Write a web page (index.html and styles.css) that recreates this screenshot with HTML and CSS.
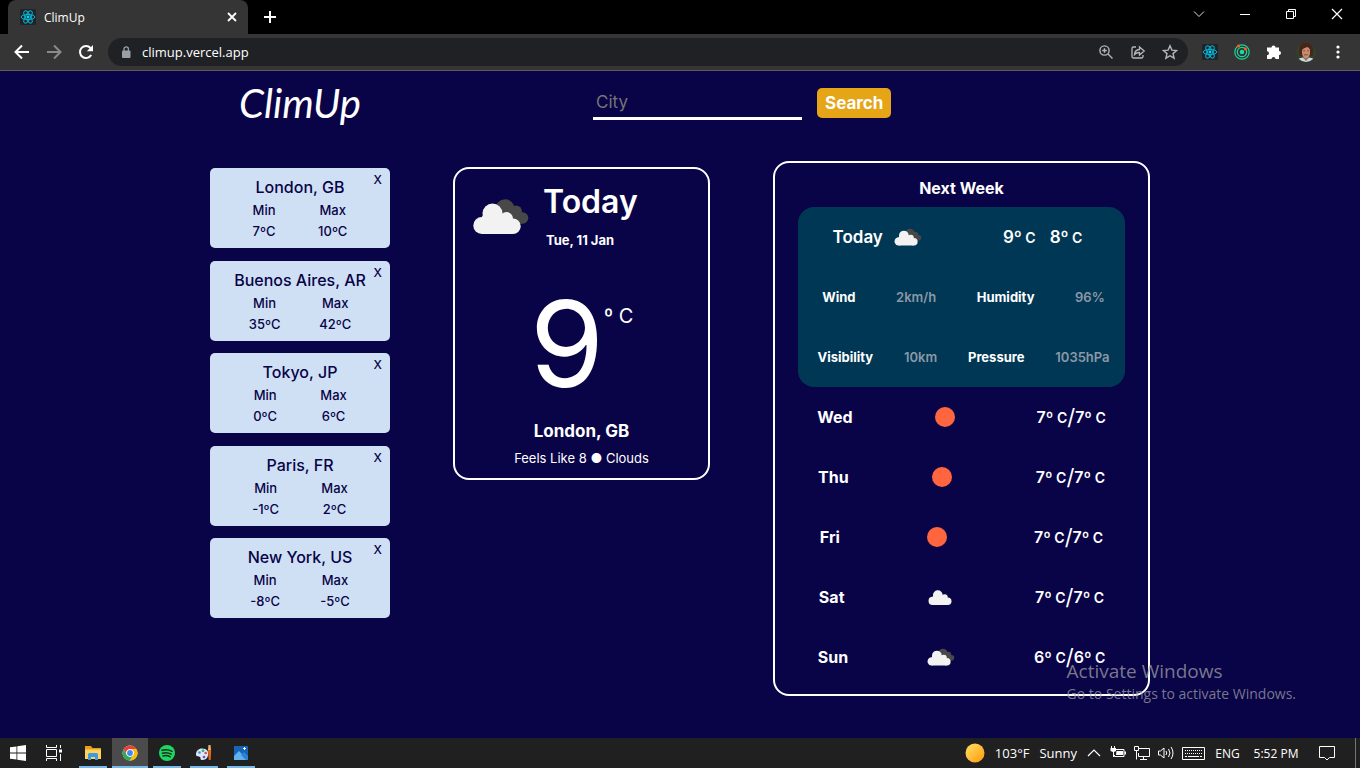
FILE: index.html
```html
<!DOCTYPE html>
<html lang="en">
<head>
<meta charset="utf-8">
<title>ClimUp</title>
<meta name="viewport" content="width=device-width, initial-scale=1">
<link rel="stylesheet" href="styles.css">
</head>
<body>
<svg class="defs" aria-hidden="true">
  <symbol id="react" viewBox="0 0 16 16">
    <rect width="16" height="16" rx="1" fill="#20232a"/>
    <g fill="none" stroke="#00b8d4" stroke-width="1">
      <ellipse cx="8" cy="8" rx="6.8" ry="2.6"/>
      <ellipse cx="8" cy="8" rx="6.8" ry="2.6" transform="rotate(60 8 8)"/>
      <ellipse cx="8" cy="8" rx="6.8" ry="2.6" transform="rotate(120 8 8)"/>
    </g>
    <circle cx="8" cy="8" r="1.4" fill="#00d8ff"/>
  </symbol>
  <symbol id="broken" viewBox="0 0 56 37">
    <g fill="#484848"><circle cx="32" cy="11" r="9.7"/><circle cx="43" cy="13.500" r="6"/><circle cx="49.500" cy="20" r="5.800"/><path d="M30 12h15l4 13.800H38z"/></g>
    <g fill="#f2f2f2"><circle cx="19.500" cy="15.500" r="10"/><circle cx="8.800" cy="27.500" r="8.500"/><circle cx="33.500" cy="20.500" r="6.500"/><circle cx="40" cy="28.300" r="7.700"/><path d="M8.800 19l2-3.500h18L38 21l2 15H8.800z"/></g>
  </symbol>
  <symbol id="cloud" viewBox="0 5 48 31">
    <g fill="#f2f2f2"><circle cx="19.500" cy="15.500" r="10"/><circle cx="8.800" cy="27.500" r="8.500"/><circle cx="33.500" cy="20.500" r="6.500"/><circle cx="40" cy="28.300" r="7.700"/><path d="M8.800 19l2-3.500h18L38 21l2 15H8.800z"/></g>
  </symbol>
  <symbol id="sun" viewBox="0 0 20 20"><circle cx="10" cy="10" r="10" fill="#ff6640"/></symbol>
</svg>

<header class="browser">
  <div class="tabs">
    <div class="tab">
      <svg class="i16"><use href="#react"/></svg>
      <span class="tab-title">ClimUp</span>
      <button class="tab-close" aria-label="Close tab"><svg class="i16" viewBox="0 0 16 16"><path d="M4 4l8 8M12 4l-8 8" stroke="#fff" stroke-width="1.800"/></svg></button>
    </div>
    <button class="new-tab" aria-label="New tab"><svg class="i16" viewBox="0 0 16 16"><path d="M8 2v12M2 8h12" stroke="#fff" stroke-width="2"/></svg></button>
    <div class="window-controls">
      <button aria-label="Search tabs"><svg class="i16" viewBox="0 0 16 16"><path d="M3 5.500l5 5 5-5" fill="none" stroke="#ddd"/></svg></button>
      <button aria-label="Minimize"><svg class="i16" viewBox="0 0 16 16"><path d="M3 8.500h10" stroke="#fff"/></svg></button>
      <button aria-label="Restore"><svg class="i16" viewBox="0 0 16 16"><path d="M3.500 5.500h7v7h-7zM5.500 5.500v-2h7v7h-2" fill="none" stroke="#fff"/></svg></button>
      <button aria-label="Close"><svg class="i16" viewBox="0 0 16 16"><path d="M3 3l10 10M13 3L3 13" stroke="#fff" stroke-width="1.200"/></svg></button>
    </div>
  </div>
  <div class="toolbar">
    <button class="tool" aria-label="Back"><svg class="i16" viewBox="0 0 16 16"><path d="M15 8H2M8 1.500L1.500 8 8 14.500" fill="none" stroke="#fff" stroke-width="2"/></svg></button>
    <button class="tool" aria-label="Forward"><svg class="i16" viewBox="0 0 16 16"><path d="M1 8h13M8 1.500L14.500 8 8 14.500" fill="none" stroke="#8a8a8a" stroke-width="2"/></svg></button>
    <button class="tool" aria-label="Reload"><svg class="i16" viewBox="0 0 16 16"><path d="M13.200 11A6 6 0 1 1 12.500 4" fill="none" stroke="#fff" stroke-width="2"/><path d="M15 1v6.200H8.800z" fill="#fff"/></svg></button>
    <div class="omnibox">
      <svg class="lock" viewBox="0 0 10 12"><rect x="1" y="4.500" width="8.500" height="7.500" rx="1" fill="#9aa0a6"/><path d="M3 5V3a2.200 2.200 0 0 1 4.400 0v2" fill="none" stroke="#9aa0a6" stroke-width="1.300"/></svg>
      <input class="url" type="text" aria-label="Address" value="climup.vercel.app">
      <button class="tool" aria-label="Zoom"><svg class="i16" viewBox="0 0 16 16" fill="none" stroke="#b4b7ba" stroke-width="1.400"><circle cx="6.500" cy="6.500" r="4.600"/><path d="M10 10l4.500 4.500M4.200 6.500h4.600M6.500 4.200v4.600"/></svg></button>
      <button class="tool" aria-label="Share"><svg class="i16" viewBox="0 0 16 16" fill="none" stroke="#b4b7ba" stroke-width="1.300"><path d="M6 3H3.500A1.500 1.500 0 0 0 2 4.500v8A1.500 1.500 0 0 0 3.500 14h8a1.500 1.500 0 0 0 1.500-1.500V11"/><path d="M4.500 10.500c.3-3.200 2-4.800 5-5V3l4.700 4-4.700 4V8.500c-2.200 0-3.700.5-5 2z"/></svg></button>
      <button class="tool" aria-label="Bookmark"><svg class="i16" viewBox="0 0 16 16"><path d="M8 1.800l1.900 4.300 4.700.4-3.600 3.100 1.100 4.600L8 11.700l-4.100 2.500L5 9.600 1.400 6.500l4.700-.4z" fill="none" stroke="#b4b7ba" stroke-width="1.400"/></svg></button>
    </div>
    <button class="tool" aria-label="React Developer Tools"><svg class="i16"><use href="#react"/></svg></button>
    <button class="tool" aria-label="Orbit extension"><svg class="i16" viewBox="0 0 16 16" fill="none" stroke="#14d99a" stroke-width="1.200"><circle cx="8" cy="8" r="7.200"/><circle cx="8" cy="8" r="4.700"/><circle cx="8" cy="8" r="1.700" fill="#14e3a0"/><circle cx="4.500" cy="2" r="1.600" fill="#ff5a1f" stroke="none"/><circle cx="11.400" cy="4.800" r="1.600" fill="#ff5a1f" stroke="none"/></svg></button>
    <button class="tool" aria-label="Extensions"><svg class="i16" viewBox="0 0 16 16"><path fill="#fff" d="M2 3.500h3.500a2 2 0 1 1 4 0H13V7a2 2 0 1 1 0 4v4H9.500a2 2 0 0 0-4 0H1v-3.700a2 2 0 0 0 0-4V3.500z"/></svg></button>
    <button class="tool" aria-label="Profile"><svg class="avatar" viewBox="0 0 20 20"><clipPath id="round"><circle cx="10" cy="10" r="10"/></clipPath><g clip-path="url(#round)"><path fill="#33402a" d="M0 0h20v20H0z"/><path fill="#47261a" d="M3.500 14C2 4 5 .500 10 .500s9 4 6.500 13.500z"/><path fill="#a96c55" d="M7.500 13h5v4l-2.500 2-2.500-2z"/><path fill="#c98c72" d="M6 7c1-3 7-3 8 0v4c0 3-2 5-4 5s-4-2-4-5z"/><path fill="#47261a" d="M5.500 9c0-5 3-6 5-6 3 0 4.500 2 4 6-1-3-2-4-3.500-4C9 6 7 6 5.500 9z"/><path fill="#6b3b2b" d="M7 8.500h2v.8H7zM11 8.500h2v.8h-2zM8 12.500h4v.8H8z"/><path fill="#c4dbe2" d="M1 20c0-3 3-4 6-4.500L10 19l3-3.500c3 .5 6 1.500 6 4.500z"/></g></svg></button>
    <button class="tool" aria-label="Menu"><svg class="i16" viewBox="0 0 16 16" fill="#fff"><circle cx="8" cy="3" r="1.600"/><circle cx="8" cy="8" r="1.600"/><circle cx="8" cy="13" r="1.600"/></svg></button>
  </div>
</header>

<main class="app">
  <div class="page">
    <div class="topbar">
      <h1 class="logo">ClimUp</h1>
      <form class="search">
        <input class="city" type="text" placeholder="City" aria-label="City">
        <button class="submit" type="button">Search</button>
      </form>
    </div>
    <div class="content">
      <section class="favorites" aria-label="Saved cities">
        <article class="fav"><button class="remove" aria-label="Remove London">X</button><h2>London, GB</h2><div class="range"><p>Min<br>7ºC</p><p>Max<br>10ºC</p></div></article>
        <article class="fav"><button class="remove" aria-label="Remove Buenos Aires">X</button><h2>Buenos Aires, AR</h2><div class="range"><p>Min<br>35ºC</p><p>Max<br>42ºC</p></div></article>
        <article class="fav"><button class="remove" aria-label="Remove Tokyo">X</button><h2>Tokyo, JP</h2><div class="range"><p>Min<br>0ºC</p><p>Max<br>6ºC</p></div></article>
        <article class="fav"><button class="remove" aria-label="Remove Paris">X</button><h2>Paris, FR</h2><div class="range"><p>Min<br>-1ºC</p><p>Max<br>2ºC</p></div></article>
        <article class="fav"><button class="remove" aria-label="Remove New York">X</button><h2>New York, US</h2><div class="range"><p>Min<br>-8ºC</p><p>Max<br>-5ºC</p></div></article>
      </section>

      <section class="today">
        <div class="today-head">
          <svg class="today-icon"><use href="#broken"/></svg>
          <div><h2>Today</h2><p class="date">Tue, 11 Jan</p></div>
        </div>
        <div class="now"><span class="degrees">9</span><span class="unit">º C</span></div>
        <p class="place">London, GB</p>
        <p class="feels">Feels Like 8 ● Clouds</p>
      </section>

      <section class="week">
        <h2>Next Week</h2>
        <div class="detail">
          <div class="detail-row head">
            <div class="label">Today<svg class="small-broken"><use href="#broken"/></svg></div>
            <div class="pair"><span>9º<small> C</small></span><span>8º<small> C</small></span></div>
          </div>
          <div class="detail-row"><b>Wind</b><span>2km/h</span><b>Humidity</b><span>96%</span></div>
          <div class="detail-row"><b>Visibility</b><span>10km</span><b>Pressure</b><span>1035hPa</span></div>
        </div>
        <div class="day"><b>Wed</b><span class="sky"><svg class="small-sun"><use href="#sun"/></svg></span><span class="temps">7º<small> C</small><i>/</i>7º<small> C</small></span></div>
        <div class="day"><b>Thu</b><span class="sky"><svg class="small-sun"><use href="#sun"/></svg></span><span class="temps">7º<small> C</small><i>/</i>7º<small> C</small></span></div>
        <div class="day"><b>Fri</b><span class="sky"><svg class="small-sun"><use href="#sun"/></svg></span><span class="temps">7º<small> C</small><i>/</i>7º<small> C</small></span></div>
        <div class="day"><b>Sat</b><span class="sky"><svg class="small-cloud"><use href="#cloud"/></svg></span><span class="temps">7º<small> C</small><i>/</i>7º<small> C</small></span></div>
        <div class="day"><b>Sun</b><span class="sky"><svg class="small-broken"><use href="#broken"/></svg></span><span class="temps">6º<small> C</small><i>/</i>6º<small> C</small></span></div>
      </section>
    </div>
  </div>
  <div class="activate"><p class="activate-title">Activate Windows</p><p>Go to Settings to activate Windows.</p></div>
</main>

<footer class="taskbar">
  <button aria-label="Start"><svg class="i16" viewBox="0 0 16 16" fill="#fff"><path d="M0 2.300L6.500 1.400v6.200H0zM7.300 1.300L16 0v7.600H7.300zM0 8.400h6.500v6.200L0 13.700zM7.300 8.400H16V16l-8.700-1.300z"/></svg></button>
  <button aria-label="Task view"><svg class="i16" viewBox="0 0 16 16" fill="none" stroke="#fff"><path d="M.5 0v2.500h10V0M.5 16v-2.500h10V16M.5 4.500h10v7H.500zM14.500 0v3M14.500 9v7"/><path d="M13 4.500h3v3h-3z" fill="#fff" stroke="none"/></svg></button>
  <div class="pinned">
    <button class="open" aria-label="File Explorer"><svg class="i16" viewBox="0 0 16 16"><path d="M0 1h6l1.500 2H16v4H0z" fill="#e2a11b"/><path d="M0 4.500h16V14H0z" fill="#ffd25c"/><path d="M3 9.500A1.500 1.500 0 0 1 4.500 8h7A1.500 1.500 0 0 1 13 9.500V15h-3v-3H6v3H3z" fill="#3c9be0"/></svg></button>
    <button class="open current" aria-label="Google Chrome"><svg class="i16" viewBox="0 0 16 16"><circle cx="8" cy="8" r="7.500" fill="#fff"/><path fill="#e94235" d="M1.500 4.200a7.500 7.500 0 0 1 13 0H8A3.800 3.800 0 0 0 4.700 10z"/><path fill="#fbbc05" d="M14.500 4.200A7.500 7.500 0 0 1 7.800 15.500l3.400-5.700A3.800 3.800 0 0 0 8 4.200z"/><path fill="#34a853" d="M1.500 4.200a7.500 7.500 0 0 0 6.300 11.300l3.400-5.700a3.800 3.800 0 0 1-6.500 0z"/><circle cx="8" cy="8" r="3.700" fill="#fff"/><circle cx="8" cy="8" r="2.900" fill="#4285f4"/></svg></button>
    <button class="open" aria-label="Spotify"><svg class="i16" viewBox="0 0 16 16"><circle cx="8" cy="8" r="8" fill="#1ed760"/><path d="M3 5.300c3.500-1 7-.7 10 1M3.500 8.200c3-.8 6-.5 8.700 1M4 10.900c2.500-.6 5-.4 7.200.9" fill="none" stroke="#1b2c20" stroke-width="1.500" stroke-linecap="round"/></svg></button>
    <button class="open" aria-label="Paint"><svg class="i16" viewBox="0 0 16 16"><path d="M6 3.500c5 0 7 3 6 7-.5 3-3 4.500-6 4.500-2 0-1-2-2-3-1.300-1-4 0-4-2.500 0-3.500 2.500-6 6-6z" fill="#d9e9f5"/><circle cx="3.500" cy="7.500" r="1.300" fill="#3a8ee6"/><circle cx="7" cy="5.800" r="1.300" fill="#2fae60"/><circle cx="9.700" cy="8" r="1.300" fill="#e84a3c"/><circle cx="8" cy="12" r="1.300" fill="#8d43c4"/><path d="M12.500 0h2l.5 5h-3z" fill="#e9b476"/><path d="M12 5h3.200l-.5 10h-2z" fill="#d9681d"/></svg></button>
    <button class="open" aria-label="Photos"><svg class="i16" viewBox="0 0 16 16"><path d="M1 1h14v14H1z" fill="#1763b6"/><path d="M1 11l5-5 9 9H1z" fill="#5fb2ee"/><path d="M8 10l3-3 4 4v4h-2z" fill="#2c83d6"/><path d="M10 3.500h3M11.500 2v3" stroke="#fff"/></svg></button>
  </div>
  <div class="tray">
    <button class="weather"><svg class="weather-icon" viewBox="0 0 20 20"><defs><linearGradient id="warm" x2="1" y2="1"><stop stop-color="#ffe066"/><stop offset="1" stop-color="#ff9a0a"/></linearGradient></defs><circle cx="10" cy="10" r="9.500" fill="url(#warm)"/></svg><span>103°F</span><span>Sunny</span></button>
    <button class="slot" aria-label="Hidden icons"><svg class="i16" viewBox="0 0 16 16"><path d="M2 11l6-6 6 6" fill="none" stroke="#fff" stroke-width="1.200"/></svg></button>
    <button class="slot" aria-label="Battery"><svg class="i16" viewBox="0 0 16 16"><path d="M5.500 4.500h8.500v7H4.500V10" fill="none" stroke="#fff"/><path d="M6.500 6H13v4H6zM14.500 6.500H16v3h-1.500zM1 1h1v2h2V1h1v2h1v3L4 7v5H3V7L.500 6V3H1z" fill="#fff"/></svg></button>
    <button class="slot" aria-label="Network"><svg class="i16" viewBox="0 0 16 16" fill="none" stroke="#fff"><path d="M5 3.500h10.500v8h-11V8M9.500 11.500V14M6 14.500h7M.500 1.500h4v4h-4zM2.500 5.500v9"/></svg></button>
    <button class="slot" aria-label="Volume"><svg class="i16" viewBox="0 0 16 16" fill="none" stroke="#fff"><path d="M.500 6v4h2L6 13V3L2.500 6zM8 6q1.500 2 0 4M10.500 4q3 4 0 8M13 2q4 6 0 12"/></svg></button>
    <button class="slot wide" aria-label="Touch keyboard"><svg class="keyboard" viewBox="0 0 23 13" fill="none" stroke="#fff"><path d="M.500.500h22v12H.500z"/><path d="M3 3.500h17M3 6.500h17" stroke-dasharray="1 1"/><path d="M3 9.500h2M6 9.500h11M18 9.500h2"/></svg></button>
    <button class="lang">ENG</button>
    <button class="clock">5:52 PM</button>
    <button class="notify" aria-label="Notifications"><svg class="i16" viewBox="0 0 16 16"><path d="M.500 1.500h15v11h-5L8 15l-2.500-2.500h-5z" fill="none" stroke="#fff"/></svg></button>
    <span class="peek"></span>
  </div>
</footer>
</body>
</html>
```
FILE: styles.css
```css
* { box-sizing: border-box; }
body {
  margin: 0;
  min-height: 100vh;
  display: flex;
  flex-direction: column;
  background: #090347;
  color: #fff;
  font-family: Inter, sans-serif;
  font-size: 16px;
}
h1, h2, p { margin: 0; }
button { border: 0; padding: 0; background: none; color: inherit; font: inherit; }
input { border: 0; padding: 0; background: none; color: inherit; font: inherit; outline: 0; min-width: 0; }
svg { display: block; flex: none; }
.defs { display: none; }
.i16 { width: 16px; height: 16px; }

/* Browser frame */
.browser { font-family: "Open Sans", "Noto Sans", sans-serif; background: #000; }
.tabs { display: flex; height: 34px; padding-left: 8px; }
.tab {
  display: flex;
  align-items: center;
  width: 240px;
  padding: 0 8px 0 12px;
  gap: 8px;
  background: #353535;
  border-radius: 8px 8px 0 0;
}
.tab-title { flex: 1; font-size: 12px; }
.tab-close, .new-tab { display: grid; place-items: center; }
.new-tab { width: 44px; }
.window-controls { display: flex; margin-left: auto; padding-bottom: 6px; }
.window-controls button { display: grid; place-items: center; width: 46px; }
.toolbar {
  display: flex;
  align-items: center;
  height: 37px;
  padding: 0 6px;
  background: #353535;
  border-bottom: 1px solid #5c5c5e;
}
.tool { display: grid; place-items: center; width: 32px; height: 28px; flex: none; }
.omnibox {
  display: flex;
  align-items: center;
  flex: 1;
  height: 28px;
  margin: 0 6px;
  padding: 0 2px 0 13px;
  border-radius: 14px;
  background: #202124;
}
.lock { width: 10px; height: 12px; margin-right: 11px; }
.url { flex: 1; font-size: 13px; }
.avatar { width: 20px; height: 20px; }

/* Application */
.app { position: relative; flex: 1; }
.page { max-width: 940px; margin: 0 auto; }
.topbar { display: flex; align-items: center; height: 64px; }
.logo {
  width: 180px;
  margin-right: 203px;
  text-align: center;
  font-family: Lato, sans-serif;
  font-size: 40px;
  font-style: italic;
  font-weight: 400;
}
.search { display: flex; align-items: center; gap: 15px; }
.city { width: 209px; height: 33px; padding: 0 3px; border-bottom: 3px solid #fff; font-size: 17px; }
.city::placeholder { color: #757575; opacity: 1; }
.submit {
  height: 30px;
  padding: 0 8px;
  border-radius: 5px;
  background: #e6a417;
  font-size: 17px;
  font-weight: 700;
}
.content { display: flex; justify-content: space-between; align-items: flex-start; padding: 26px 0 42px; }

.favorites {
  display: flex;
  flex-direction: column;
  justify-content: space-between;
  width: 180px;
  min-height: 450px;
  margin-top: 7px;
}
.fav {
  position: relative;
  min-height: 80px;
  padding-top: 7px;
  border-radius: 5px;
  background: #cfe0f5;
  color: #090347;
  text-align: center;
}
.fav h2 { font-size: 16px; font-weight: 500; line-height: 25px; }
.range { display: flex; justify-content: space-evenly; font-size: 13px; font-weight: 500; line-height: 21px; }
.remove { position: absolute; top: 4px; right: 8px; font-size: 12px; font-weight: 500; line-height: 16px; }

.today {
  width: 257px;
  min-height: 313px;
  margin-top: 6px;
  border: 2px solid #fff;
  border-radius: 16px;
  text-align: center;
}
.today-head { display: flex; gap: 14px; padding: 9px 0 0 18px; text-align: left; }
.today-icon { width: 56px; height: 37px; margin-top: 20px; }
.today-head h2 { font-size: 32px; font-weight: 600; line-height: 48px; }
.date { padding: 4px 0 0 3px; font-size: 13px; font-weight: 700; line-height: 20px; }
.now { display: flex; justify-content: center; margin-top: 34px; }
.degrees { font-size: 120px; line-height: 120px; }
.unit { padding-top: 18px; font-size: 20px; line-height: 28px; }
.place { margin-top: 14px; font-size: 17px; font-weight: 700; line-height: 26px; }
.feels { margin-top: 4px; font-size: 13px; line-height: 20px; }

.week {
  width: 377px;
  padding: 13px 23px 7px;
  border: 2px solid #fff;
  border-radius: 16px;
}
.week h2 { padding-bottom: 7px; text-align: center; font-size: 16px; font-weight: 700; line-height: 24px; }
.detail { border-radius: 16px; background: #003755; }
.detail-row { display: flex; align-items: center; justify-content: space-around; height: 60px; padding-left: 4px; font-size: 13px; font-weight: 600; }
.detail-row b { font-weight: 700; }
.detail-row > span { color: #8b98a5; }
.detail .head { padding: 0 8px 0 0; font-size: 17px; }
.label { display: flex; align-items: center; gap: 11px; }
.label svg { margin-right: 12px; }
.pair { display: flex; gap: 14px; }
.week small { font-size: 14px; }
.day { display: flex; align-items: center; justify-content: space-around; height: 60px; font-size: 16px; font-weight: 600; }
.day b { font-weight: 700; }
.sky { display: grid; place-items: center; width: 107px; }
.small-sun { width: 20px; height: 20px; }
.small-cloud { width: 24px; height: 15px; }
.small-broken { width: 28px; height: 18px; }
.temps { display: flex; align-items: center; white-space: pre; }
.temps i { font-size: 22px; font-style: normal; font-weight: 400; line-height: 24px; }

.activate {
  position: absolute;
  right: 64px;
  bottom: 34px;
  color: rgba(160, 160, 165, 0.75);
  font-family: "Open Sans", "Noto Sans", sans-serif;
  font-size: 14px;
  line-height: 20px;
}
.activate-title { font-size: 19px; line-height: 26px; }

/* Taskbar */
.taskbar {
  display: flex;
  height: 30px;
  background: #202020;
  font-family: "Open Sans", "Noto Sans", sans-serif;
  font-size: 12px;
}
.taskbar button { display: flex; align-items: center; justify-content: center; min-width: 24px; }
.taskbar > button, .pinned button { width: 36px; }
.pinned { display: flex; gap: 1px; margin-left: 3px; }
.open { background: linear-gradient(#76b9ed, #76b9ed) center bottom / 28px 2px no-repeat; }
.pinned .current { background: linear-gradient(#76b9ed, #76b9ed) center bottom / 36px 2px no-repeat #4b4b4b; }
.tray { display: flex; margin-left: auto; white-space: nowrap; }
.weather { gap: 10px; margin-right: 5px; font-size: 13px; }
.weather-icon { width: 20px; height: 20px; }
.slot { width: 24px; }
.tray .wide { width: 30px; }
.keyboard { width: 23px; height: 13px; }
.lang { width: 39px; }
.clock { width: 58px; }
.notify { width: 44px; }
.peek { width: 11px; border-left: 1px solid transparent; background: linear-gradient(#777, #777) 5px 0 / 1px 100% no-repeat; }
```
